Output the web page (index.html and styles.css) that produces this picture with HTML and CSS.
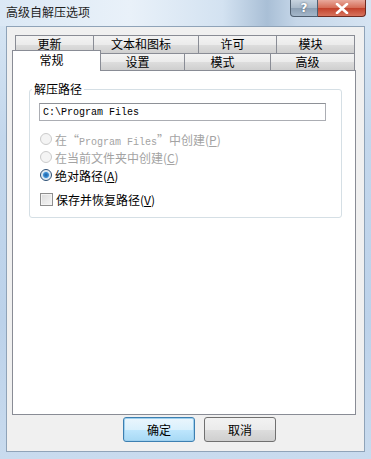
FILE: index.html
```html
<!DOCTYPE html>
<html lang="zh-CN">
<head>
    <meta charset="UTF-8">
    <title>高级自解压选项</title>
    <link rel="stylesheet" href="styles.css">
</head>
<body>
    <div class="window">
        <div class="titlebar">
            <span class="title">高级自解压选项</span>
            <div class="caption-buttons">
                <span class="cap-btn cap-help">?</span>
                <span class="cap-btn cap-close">
                    <svg width="14" height="11" viewBox="0 0 14 11"><path d="M2 1 L12 10 M12 1 L2 10" stroke="#fff" stroke-width="2.6" stroke-linecap="round"/></svg>
                </span>
            </div>
        </div>

        <div class="client">
            <div class="tab-row back">
                <div class="tab" style="width:79px">更新</div>
                <div class="tab" style="width:105px">文本和图标</div>
                <div class="tab" style="width:78px">许可</div>
                <div class="tab" style="width:78px">模块</div>
            </div>
            <div class="tab-row front">
                <div class="tab selected" style="width:89px">常规</div>
                <div class="tab" style="width:84px">设置</div>
                <div class="tab" style="width:86px">模式</div>
                <div class="tab" style="width:84px">高级</div>
            </div>

            <div class="panel">
                <fieldset class="group">
                    <legend>解压路径</legend>
                    <input class="path" type="text" value="C:\Program Files">

                    <label class="option disabled">
                        <input type="radio" name="path" disabled>
                        <span>在“<span class="mono">Program Files</span>”中创建(<u>P</u>)</span>
                    </label>
                    <label class="option disabled">
                        <input type="radio" name="path" disabled>
                        <span>在当前文件夹中创建(<u>C</u>)</span>
                    </label>
                    <label class="option">
                        <input type="radio" name="path" checked>
                        <span>绝对路径(<u>A</u>)</span>
                    </label>
                    <label class="option check">
                        <input type="checkbox">
                        <span>保存并恢复路径(<u>V</u>)</span>
                    </label>
                </fieldset>
            </div>

            <div class="button-row">
                <button class="btn default">确定</button>
                <button class="btn">取消</button>
            </div>
        </div>
    </div>
</body>
</html>
```

FILE: styles.css
```css
body { margin: 0; font-family: "Noto Sans CJK SC", "Noto Sans", sans-serif; font-size: 12px; color: #000; }
.window { width: 371px; height: 459px; box-sizing: border-box; display: flex; flex-direction: column; background: linear-gradient(to bottom, #d9e7f4, #c3d7ec 30%, #bcd2ea 70%, #c9dbee); }

.titlebar { height: 26px; display: flex; align-items: flex-start; background: linear-gradient(to right, #dbe8f5, #e9f1f9 35%, #d3e2f1 60%, #a9bfd6 72%, #c6d7e9 80%, #d6e4f2); }
.title { padding: 4px 0 0 6px; line-height: 16px; font-size: 12px; color: #1e1e1e; }
.caption-buttons { margin-left: auto; margin-right: 5px; display: flex; }
.cap-btn { height: 17px; display: flex; align-items: center; justify-content: center; border: 1px solid #4f5f70; border-top: none; box-sizing: border-box; }
.cap-help { width: 28px; border-radius: 0 0 0 4px; background: linear-gradient(to bottom, #c7d3df, #a8b8c8 50%, #8c9fb3 51%, #a4b7ca); color: #fff; font-family: "DejaVu Sans", sans-serif; font-weight: bold; font-size: 12px; text-shadow: 0 0 2px #3a4a5c; }
.cap-close { width: 48px; border-left: none; border-radius: 0 0 4px 0; background: linear-gradient(to bottom, #e9a99c, #d56b55 50%, #c2402a 51%, #d7735d); border-color: #6e2a20; }

.client { flex: 1; margin: 0 6px 7px 6px; background: #f0f0f0; border: 1px solid #8fa3b8; display: flex; flex-direction: column; }

.tab-row { display: flex; }
.tab { box-sizing: border-box; height: 18px; line-height: 16px; text-align: center; padding-right: 10px; border: 1px solid #898c95; border-bottom: none; border-left: none; background: linear-gradient(to bottom, #f3f3f3, #ebebeb 50%, #dddddd 51%, #cfcfcf); }
.tab:first-child { border-left: 1px solid #898c95; }
.back { margin: 8px 0 0 8px; }
.front { margin-left: 5px; height: 17px; align-items: flex-end; }
.front .tab { height: 17px; line-height: 16px; }
.front .tab.selected { height: 21px; line-height: 14px; padding-top: 2px; margin-bottom: -1px; background: #fff; position: relative; z-index: 1; border-left: 1px solid #898c95; }

.panel { margin-left: 5px; width: 344px; height: 345px; box-sizing: border-box; background: #fff; border: 1px solid #898c95; }

.group { margin: 11px 0 0 16px; width: 313px; box-sizing: border-box; padding: 0 0 9px 0; border: 1px solid #d5dfe5; border-radius: 3px; }
.group legend { margin-left: 2px; padding: 0 2px; line-height: 14px; }
.path { display: block; margin: 7px 0 0 9px; width: 287px; height: 18px; box-sizing: border-box; padding: 0 3px; border: 1px solid #abadb3; border-top-color: #8e9197; font-family: "Liberation Mono", monospace; font-size: 10px; color: #000; outline: none; }

.option { display: flex; align-items: center; height: 18px; margin-left: 10px; }
.option:first-of-type { margin-top: 9px; }
.option.disabled { color: #a3a3a3; }
.option.check { margin-top: 6px; }
.mono { font-family: "Liberation Mono", monospace; font-size: 10px; }

.option input { appearance: none; margin: 0 3px 0 0; width: 12px; height: 12px; box-sizing: border-box; flex: none; }
.option input[type=radio] { border-radius: 50%; border: 1px solid #8f8f8f; background: radial-gradient(circle, #e8e8e8, #f8f8f8); }
.option input[type=radio]:disabled { border-color: #cbcbcb; background: #f4f4f4; }
.option input[type=radio]:checked { background: radial-gradient(circle, #1f5e9e 0, #3c8fd6 2.5px, #cfe3f3 3.5px, #f2f2f2 5px); border-color: #2c4f75; }
.option input[type=checkbox] { width: 13px; height: 13px; border: 1px solid #8f8f8f; background: linear-gradient(135deg, #dcdcdc, #f6f6f6); box-shadow: inset 0 0 0 1px #f4f4f4; }

.button-row { display: flex; gap: 9px; margin: 2px 0 0 116px; }
.btn { width: 72px; height: 25px; box-sizing: border-box; padding: 0; font-family: "Noto Sans CJK SC", sans-serif; font-size: 12px; color: #000; border: 1px solid #707070; border-radius: 3px; background: linear-gradient(to bottom, #f2f2f2, #ebebeb 50%, #dddddd 51%, #cfcfcf); }
.btn.default { border-color: #3c7fb1; background: linear-gradient(to bottom, #eaf6fd, #d9f0fc 50%, #bee6fd 51%, #a7d9f5); box-shadow: inset 0 0 0 1px #9fd0ee; }
```
